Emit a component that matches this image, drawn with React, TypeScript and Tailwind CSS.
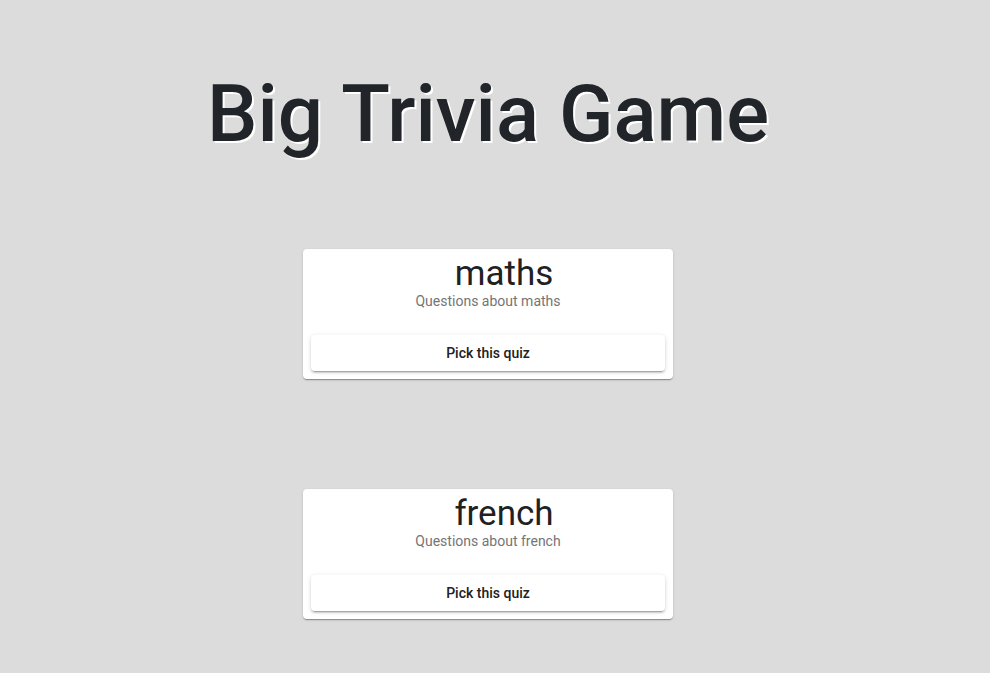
const quizzes = [
  { name: "maths", description: "Questions about maths" },
  { name: "french", description: "Questions about french" },
];

function QuizCard({ name, description }: { name: string; description: string }) {
  return (
    <div className="w-[370px] rounded bg-white px-2 pt-[7px] pb-2 shadow-[0_2px_1px_-1px_rgba(0,0,0,0.2),0_1px_1px_0_rgba(0,0,0,0.14),0_1px_3px_0_rgba(0,0,0,0.12)]">
      <h2 className="pl-8 text-center text-[35px] leading-[35px] text-[#212121]">{name}</h2>
      <p className="text-center text-sm leading-5 text-[#757575]">{description}</p>
      <button className="mt-[24px] h-9 w-full rounded bg-white text-sm font-medium text-[#212121] shadow-[0_3px_1px_-2px_rgba(0,0,0,0.2),0_2px_2px_0_rgba(0,0,0,0.14),0_1px_5px_0_rgba(0,0,0,0.12)]">
        Pick this quiz
      </button>
    </div>
  );
}

export default function App() {
  return (
    <div className="min-h-screen bg-[#dcdcdc] pt-[66px] pr-[14px] font-['Roboto',sans-serif]">
      <h1 className="text-center text-[80px] font-medium leading-[1.2] text-[#212529] [text-shadow:2px_2px_0_#fff]">
        Big Trivia Game
      </h1>
      <div className="mt-[87px] flex flex-col items-center gap-[110px]">
        {quizzes.map((q) => (
          <QuizCard key={q.name} {...q} />
        ))}
      </div>
    </div>
  );
}
